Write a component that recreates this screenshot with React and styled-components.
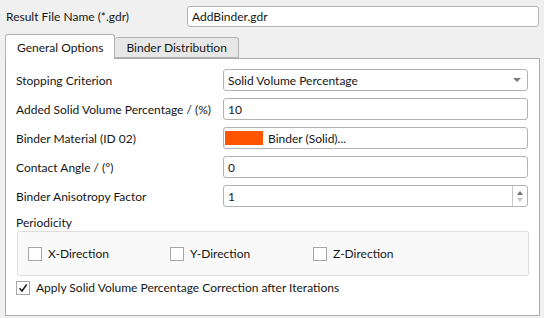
import React from "react";
import styled, { createGlobalStyle } from "styled-components";

const Global = createGlobalStyle`
  html, body { margin: 0; padding: 0; background: #f0f0f0; }
  body { font-family: Lato, "Liberation Sans", sans-serif; font-size: 12px; color: #161616; }
  * { box-sizing: border-box; }
`;

const Page = styled.div`
  width: 544px;
  height: 318px;
  padding: 6px 5px 0 5px;
  display: flex;
  flex-direction: column;
  overflow: hidden;
`;

const TopRow = styled.div`
  display: flex;
  align-items: center;
  height: 21px;
`;

const TopLabel = styled.div`
  width: 182px;
  padding-left: 1px;
`;

const TextField = styled.div`
  flex: 1;
  height: ${(p) => p.$h || 22}px;
  background: #fff;
  border: 1px solid #b3b3b3;
  border-radius: 3px;
  display: flex;
  align-items: center;
  padding-left: 4px;
  position: relative;
  white-space: nowrap;
`;

const TabBar = styled.div`
  display: flex;
  align-items: flex-end;
  margin-top: 7px;
  height: 24px;
  position: relative;
  z-index: 1;
`;

const Tab = styled.div`
  height: ${(p) => (p.$active ? 25 : 21)}px;
  margin-bottom: ${(p) => (p.$active ? -1 : 0)}px;
  padding: 0 11px;
  display: flex;
  align-items: center;
  background: ${(p) => (p.$active ? "#fff" : "#e7e7e7")};
  border: 1px solid #b3b3b3;
  border-bottom: ${(p) => (p.$active ? "none" : "1px solid #b3b3b3")};
  border-left: ${(p) => (p.$first ? "1px solid #b3b3b3" : "none")};
  border-radius: 3px 3px 0 0;
`;

const Panel = styled.div`
  width: 535px;
  height: 258px;
  background: #fff;
  border: 1px solid #ababab;
  padding: 10px 11px 0 10px;
  display: flex;
  flex-direction: column;
`;

const FormRow = styled.div`
  display: flex;
  align-items: center;
  margin-bottom: 7px;
`;

const Label = styled.div`
  width: 207px;
  white-space: nowrap;
`;

const Arrow = styled.span`
  position: absolute;
  right: 6px;
  top: 8px;
  width: 0;
  height: 0;
  border-left: 4px solid transparent;
  border-right: 4px solid transparent;
  border-top: 4px solid #7a7a7a;
`;

const Swatch = styled.span`
  width: 38px;
  height: 14px;
  background: #ff5500;
  margin-left: -3px;
  margin-right: 5px;
`;

const Spin = styled.div`
  position: absolute;
  right: 0;
  top: 0;
  bottom: 0;
  width: 15px;
  border-left: 1px solid #c8c8c8;
  display: flex;
  flex-direction: column;
  align-items: center;
  justify-content: center;
  gap: 3px;
`;

const SpinArrow = styled.span`
  width: 0;
  height: 0;
  border-left: 3.5px solid transparent;
  border-right: 3.5px solid transparent;
  ${(p) =>
    p.$up
      ? `border-bottom: 4px solid #6e6e6e;`
      : `border-top: 4px solid #c4c4c4;`}
`;

const SectionLabel = styled.div`
  height: 16px;
  display: flex;
  align-items: center;
`;

const Group = styled.div`
  margin-top: 1px;
  margin-left: 1px;
  width: 512px;
  height: 45px;
  background: #f9f9f9;
  border: 1px solid #dedede;
  border-radius: 2px;
  display: flex;
  align-items: center;
  padding-left: 10px;
`;

const CheckItem = styled.label`
  display: flex;
  align-items: center;
  width: ${(p) => p.$w || "auto"};
  gap: 6px;
`;

const Box = styled.span`
  width: 14px;
  height: 14px;
  border: 1px solid #a6a6a6;
  background: #fff;
  display: flex;
  align-items: center;
  justify-content: center;
`;

const ApplyRow = styled.div`
  margin-top: 4px;
`;

const Check = ({ checked }) => (
  <Box>
    {checked && (
      <svg width="10" height="10" viewBox="0 0 10 10">
        <path d="M1.5 5.2 L4 8 L8.7 1.5" fill="none" stroke="#1a1a1a" strokeWidth="1.5" />
      </svg>
    )}
  </Box>
);

export default function App() {
  return (
    <>
      <Global />
      <Page>
        <TopRow>
          <TopLabel>Result File Name (*.gdr)</TopLabel>
          <TextField $h={21}>AddBinder.gdr</TextField>
        </TopRow>
        <TabBar>
          <Tab $active $first>General Options</Tab>
          <Tab>Binder Distribution</Tab>
        </TabBar>
        <Panel>
          <FormRow>
            <Label>Stopping Criterion</Label>
            <TextField>
              Solid Volume Percentage
              <Arrow />
            </TextField>
          </FormRow>
          <FormRow>
            <Label>Added Solid Volume Percentage / (%)</Label>
            <TextField>10</TextField>
          </FormRow>
          <FormRow>
            <Label>Binder Material (ID 02)</Label>
            <TextField>
              <Swatch />
              Binder (Solid)...
            </TextField>
          </FormRow>
          <FormRow>
            <Label>Contact Angle / (°)</Label>
            <TextField>0</TextField>
          </FormRow>
          <FormRow>
            <Label>Binder Anisotropy Factor</Label>
            <TextField>
              1
              <Spin>
                <SpinArrow $up />
                <SpinArrow />
              </Spin>
            </TextField>
          </FormRow>
          <SectionLabel>Periodicity</SectionLabel>
          <Group>
            <CheckItem $w="142px">
              <Check /> X-Direction
            </CheckItem>
            <CheckItem $w="143px">
              <Check /> Y-Direction
            </CheckItem>
            <CheckItem>
              <Check /> Z-Direction
            </CheckItem>
          </Group>
          <ApplyRow>
            <CheckItem>
              <Check checked /> Apply Solid Volume Percentage Correction after Iterations
            </CheckItem>
          </ApplyRow>
        </Panel>
      </Page>
    </>
  );
}
